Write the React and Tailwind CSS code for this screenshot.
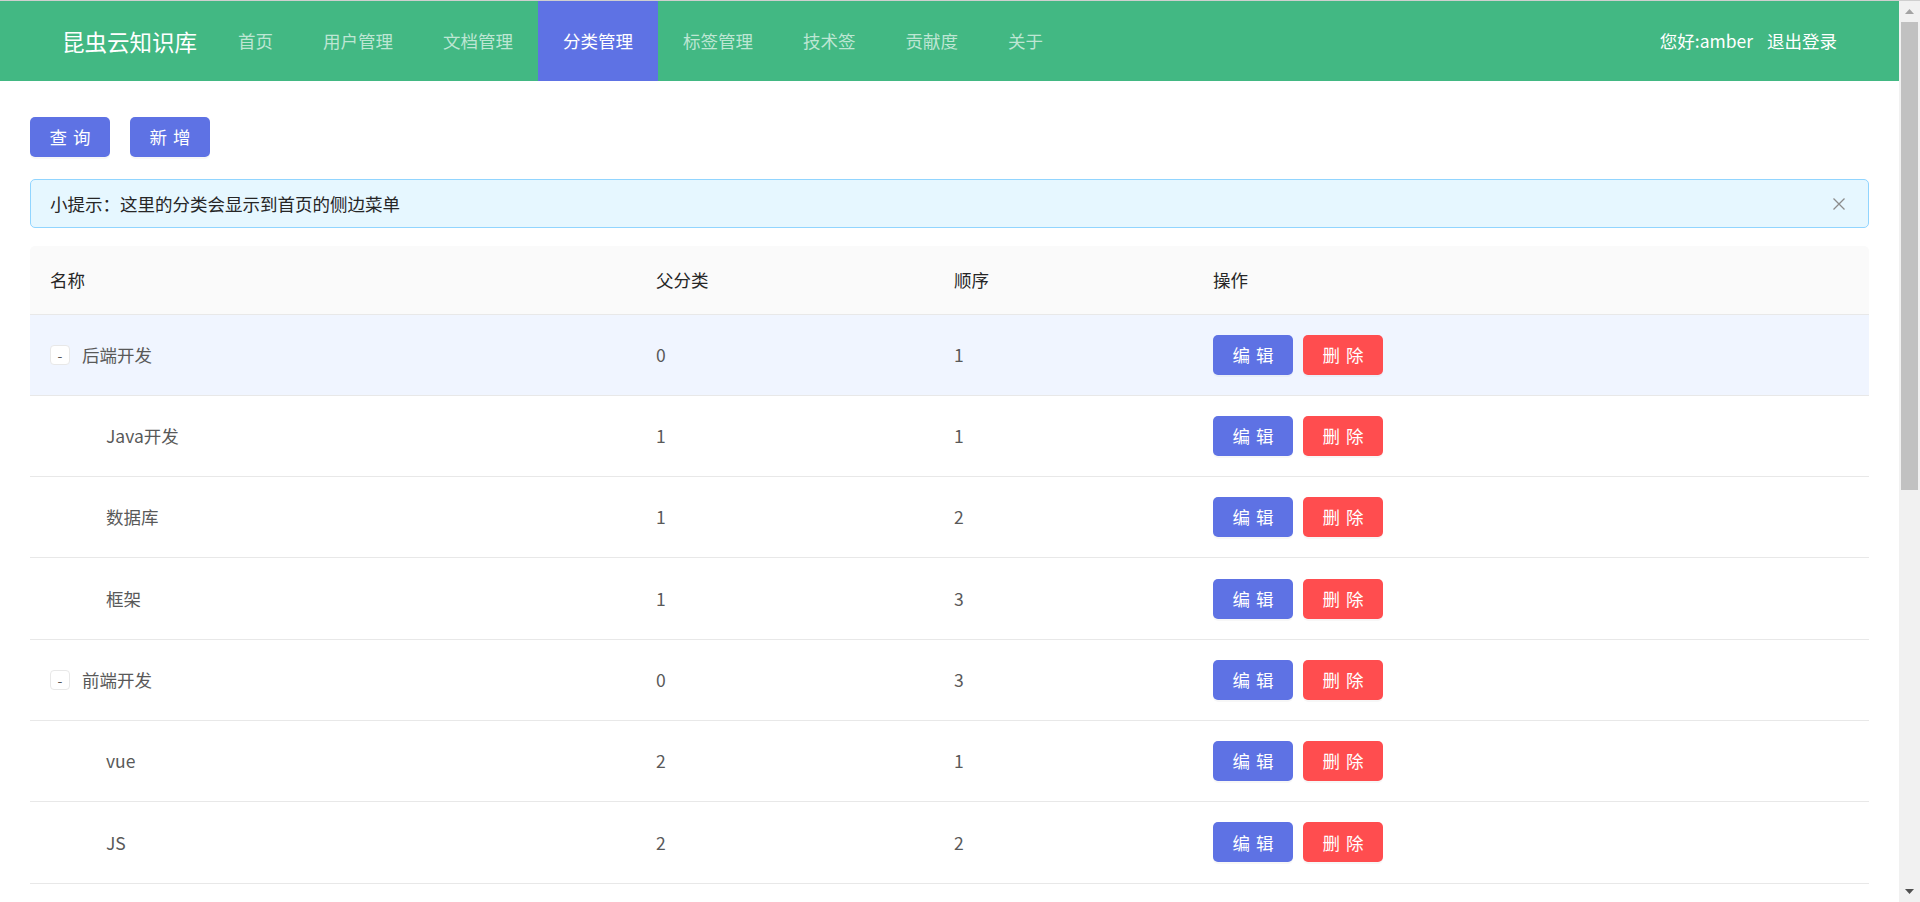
import React from "react";

const navItems = ["首页", "用户管理", "文档管理", "分类管理", "标签管理", "技术签", "贡献度", "关于"];

const rows = [
  { name: "后端开发", parent: "0", sort: "1", top: true, hover: true },
  { name: "Java开发", parent: "1", sort: "1" },
  { name: "数据库", parent: "1", sort: "2" },
  { name: "框架", parent: "1", sort: "3" },
  { name: "前端开发", parent: "0", sort: "3", top: true },
  { name: "vue", parent: "2", sort: "1" },
  { name: "JS", parent: "2", sort: "2" },
];

const Btn = ({ children, danger }) => (
  <button
    className={`h-[40px] w-[80px] rounded-[5px] text-white text-[17.5px] leading-none shadow-[0_2px_0_rgba(0,0,0,0.03)] flex items-center justify-center ${
      danger ? "bg-[#ff4d4f]" : "bg-[#5e72e4]"
    }`}
  >
    <span className="tracking-[0.34em] mr-[-0.34em]">{children}</span>
  </button>
);

const App = () => {
  return (
    <div className="h-[902px] w-[1920px] overflow-hidden flex flex-col bg-white font-['Noto_Sans_CJK_SC','Noto_Sans',sans-serif]">
      {/* window edge */}
      <div className="h-px bg-[#cfcfcf] shrink-0" />
      <div className="flex flex-1 min-h-0">
        <div className="flex-1 min-w-0 flex flex-col">
          {/* header */}
          <header className="h-[80px] shrink-0 bg-[#42b883] flex items-center px-[62px]">
            <div className="text-[22.5px] text-white leading-none mr-[16px]">昆虫云知识库</div>
            <nav className="flex h-full">
              {navItems.map((item) => (
                <div
                  key={item}
                  className={`h-full px-[25px] flex items-center text-[17.5px] leading-none ${
                    item === "分类管理" ? "bg-[#5e72e4] text-white" : "text-[#bde6d3]"
                  }`}
                >
                  {item}
                </div>
              ))}
            </nav>
            <div className="ml-auto flex items-center gap-[14px] text-white text-[17.5px] leading-none">
              <span>您好:amber</span>
              <span>退出登录</span>
            </div>
          </header>

          {/* content */}
          <main className="px-[30px] pt-[36px]">
            <div className="flex gap-[20px]">
              <Btn>查询</Btn>
              <Btn>新增</Btn>
            </div>

            <div className="mt-[22px] h-[49px] border border-[#91d5ff] bg-[#e6f7ff] rounded-[5px] flex items-center pl-[19px] pr-[22px]">
              <span className="text-[17.5px] text-[#262626] leading-none">小提示：这里的分类会显示到首页的侧边菜单</span>
              <svg className="ml-auto" width="14" height="14" viewBox="0 0 14 14">
                <path d="M1.5 1.5 L12.5 12.5 M12.5 1.5 L1.5 12.5" stroke="#8c8c8c" strokeWidth="1.3" fill="none" />
              </svg>
            </div>

            <div className="mt-[18px]">
              <div className="grid grid-cols-[606px_298px_259px_1fr] h-[68.5px] bg-[#fafafa] border-b border-[#e8e8e8] rounded-t-[5px] text-[17.5px] text-[#262626] leading-none">
                <div className="flex items-center pl-[20px]">名称</div>
                <div className="flex items-center pl-[20px]">父分类</div>
                <div className="flex items-center pl-[20px]">顺序</div>
                <div className="flex items-center pl-[20px]">操作</div>
              </div>
              {rows.map((r) => (
                <div
                  key={r.name}
                  className={`grid grid-cols-[606px_298px_259px_1fr] h-[81.3px] border-b border-[#e8e8e8] text-[17.5px] text-[#595959] leading-none ${
                    r.hover ? "bg-[#f0f5ff]" : "bg-white"
                  }`}
                >
                  <div className="flex items-center pl-[20px]">
                    {r.top ? (
                      <>
                        <span className="w-[20px] h-[20px] border border-[#e8e8e8] rounded-[4px] bg-white flex items-center justify-center text-[14px] text-[#595959] mr-[12px]">
                          -
                        </span>
                        <span>{r.name}</span>
                      </>
                    ) : (
                      <span className="pl-[56px]">{r.name}</span>
                    )}
                  </div>
                  <div className="flex items-center pl-[20px]">{r.parent}</div>
                  <div className="flex items-center pl-[20px]">{r.sort}</div>
                  <div className="flex items-center pl-[20px] gap-[10px]">
                    <Btn>编辑</Btn>
                    <Btn danger>删除</Btn>
                  </div>
                </div>
              ))}
            </div>
          </main>
        </div>

        {/* scrollbar */}
        <div className="w-[21px] shrink-0 bg-[#f1f1f1] flex flex-col items-center">
          <div className="h-[21px] w-full flex items-center justify-center">
            <svg width="9" height="5" viewBox="0 0 9 5">
              <path d="M4.5 0 L9 5 L0 5 Z" fill="#a3a3a3" />
            </svg>
          </div>
          <div className="w-[17px] h-[468px] bg-[#c1c1c1]" />
          <div className="mt-auto h-[21px] w-full flex items-center justify-center">
            <svg width="9" height="5" viewBox="0 0 9 5">
              <path d="M0 0 L9 0 L4.5 5 Z" fill="#505050" />
            </svg>
          </div>
        </div>
      </div>
    </div>
  );
};

export default App;
